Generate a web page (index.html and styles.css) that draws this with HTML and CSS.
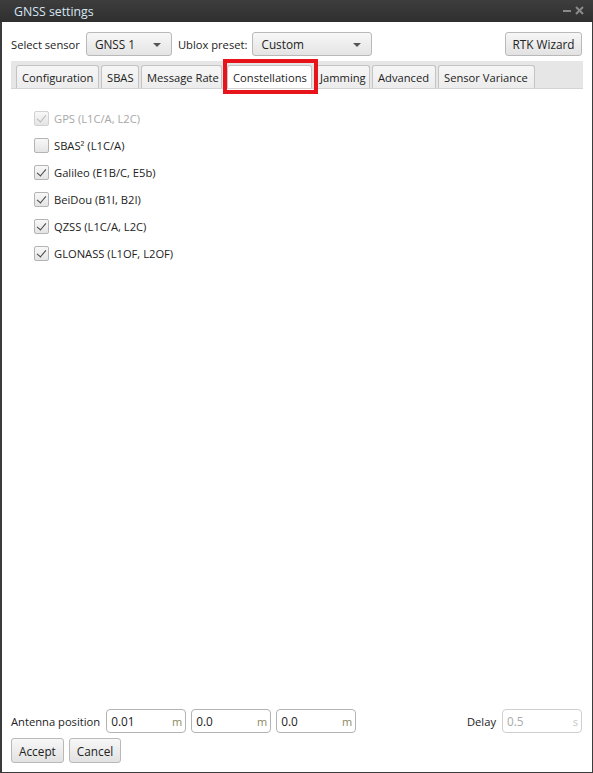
FILE: index.html
```html
<!DOCTYPE html>
<html lang="en">
  <head>
    <meta charset="UTF-8" />
    <title>GNSS settings</title>
    <link rel="stylesheet" href="styles.css">
  </head>
  <body>
    <div class="window">
      <div class="titlebar">
        <span class="title">GNSS settings</span>
        <span class="controls">
          <svg width="22" height="10" viewBox="0 0 22 10">
            <rect x="0" y="4" width="8" height="2" fill="#8a8a8a" />
            <path d="M13 1 L20 8 M20 1 L13 8" stroke="#8a8a8a" stroke-width="2" />
          </svg>
        </span>
      </div>

      <div class="content">
        <div class="toprow">
          <span class="label">Select sensor</span>
          <div class="combo sensor">GNSS 1<span class="arrow"></span></div>
          <span class="label">Ublox preset:</span>
          <div class="combo preset">Custom<span class="arrow"></span></div>
          <div class="spacer"></div>
          <button class="btn wizard">RTK Wizard</button>
        </div>

        <div class="tabbar">
          <div class="tab w-config">Configuration</div>
          <div class="tab w-sbas">SBAS</div>
          <div class="tab w-msg">Message Rate</div>
          <div class="tab w-const selected">Constellations</div>
          <div class="tab w-jam">Jamming</div>
          <div class="tab w-adv">Advanced</div>
          <div class="tab w-var">Sensor Variance</div>
        </div>

        <div class="checklist">
          <label class="check disabled"><span class="box on"></span>GPS (L1C/A, L2C)</label>
          <label class="check"><span class="box"></span>SBAS² (L1C/A)</label>
          <label class="check"><span class="box on"></span>Galileo (E1B/C, E5b)</label>
          <label class="check"><span class="box on"></span>BeiDou (B1I, B2I)</label>
          <label class="check"><span class="box on"></span>QZSS (L1C/A, L2C)</label>
          <label class="check"><span class="box on"></span>GLONASS (L1OF, L2OF)</label>
        </div>

        <div class="antenna">
          <span class="label">Antenna position</span>
          <div class="field">0.01<span class="unit">m</span></div>
          <div class="field">0.0<span class="unit">m</span></div>
          <div class="field">0.0<span class="unit">m</span></div>
          <div class="spacer"></div>
          <span class="label">Delay</span>
          <div class="field disabled">0.5<span class="unit">s</span></div>
        </div>

        <div class="actions">
          <button class="btn">Accept</button>
          <button class="btn">Cancel</button>
        </div>
      </div>
    </div>
  </body>
</html>
```

FILE: styles.css
```css
* {
  margin: 0;
  padding: 0;
  box-sizing: border-box;
}

body {
  font-family: "Open Sans", "Noto Sans", sans-serif;
  font-size: 11.2px;
  color: #222;
  background: #fff;
}

.window {
  width: 593px;
  height: 773px;
  display: flex;
  flex-direction: column;
  border: 1px solid #3b3b3b;
  border-top: none;
  border-left-width: 2px;
}

.titlebar {
  height: 22px;
  background: linear-gradient(#3d3d3d, #2f2f2f);
  color: #d7e6f4;
  font-size: 12.3px;
  display: flex;
  align-items: center;
  padding: 0 8px 0 14px;
  margin: 0 -1px 0 -2px;
}

.titlebar .title {
  flex: 1;
}

.controls svg {
  display: block;
}

.content {
  flex: 1;
  display: flex;
  flex-direction: column;
  padding: 10px 10px 9px 9px;
}

.toprow {
  display: flex;
  align-items: center;
  height: 24px;
}

.spacer {
  flex: 1;
}

.label {
  margin-right: 5px;
}

.combo {
  position: relative;
  height: 24px;
  border: 1px solid #b9b9b9;
  border-radius: 3px;
  background: linear-gradient(#f7f7f7, #e4e4e4);
  display: flex;
  align-items: center;
  padding-left: 8px;
  margin-right: 6px;
  font-size: 11.8px;
}

.combo.sensor {
  width: 86px;
  margin-left: 1px;
}

.combo.preset {
  width: 120px;
}

.arrow {
  position: absolute;
  right: 10px;
  top: 10px;
  border-left: 4px solid transparent;
  border-right: 4px solid transparent;
  border-top: 4px solid #555;
}

.btn {
  font-family: inherit;
  font-size: 11.8px;
  color: #222;
  height: 25px;
  padding: 0 7px;
  border: 1px solid #b9b9b9;
  border-radius: 3px;
  background: linear-gradient(#f7f7f7, #e2e2e2);
  white-space: nowrap;
}

.btn.wizard {
  width: 77px;
  height: 24px;
  padding: 0;
}

.tabbar {
  margin-top: 5px;
  height: 28px;
  background: #e6e6e6;
  border-bottom: 1px solid #d4d4d4;
  display: flex;
  align-items: flex-end;
  gap: 2px;
  padding-left: 5px;
  width: 572px;
}

.tab {
  height: 23px;
  border: 1px solid #c4c4c4;
  border-bottom: none;
  border-radius: 3px 3px 0 0;
  background: linear-gradient(#f6f6f6, #ececec);
  display: flex;
  align-items: center;
  padding-left: 5px;
  white-space: nowrap;
  overflow: hidden;
}

.tab.selected {
  position: relative;
  overflow: visible;
  background: #fff;
  margin-left: 3px;
}

.tab.selected::after {
  content: "";
  position: absolute;
  left: -5px;
  right: -7px;
  top: -7px;
  bottom: -6px;
  border: 4px solid #e8141c;
}

.w-config { width: 83px; }
.w-sbas { width: 38px; }
.w-msg { width: 81px; }
.w-const { width: 85px; }
.w-jam { width: 56px; }
.w-adv { width: 64px; }
.w-var { width: 97px; }

.checklist {
  display: flex;
  flex-direction: column;
  gap: 11px;
  padding: 21px 0 0 23px;
  flex: 1;
}

.check {
  display: flex;
  align-items: center;
  height: 16px;
  gap: 5px;
}

.check.disabled {
  color: #a8a8a8;
}

.box {
  width: 15px;
  height: 15px;
  border: 1px solid #b4b4b4;
  border-radius: 2px;
  background: linear-gradient(#f8f8f8, #e4e4e4);
  position: relative;
}

.box.on::after {
  content: "";
  position: absolute;
  left: 4px;
  top: 1px;
  width: 4px;
  height: 8px;
  border-right: 1.5px solid #444;
  border-bottom: 1.5px solid #444;
  transform: rotate(40deg);
}

.check.disabled .box {
  border-color: #d2d2d2;
}

.check.disabled .box.on::after {
  border-color: #b8b8b8;
}

.antenna {
  display: flex;
  align-items: center;
  height: 24px;
  gap: 5px;
  margin-bottom: -1px;
}

.antenna .label {
  margin-right: 1px;
}

.field {
  width: 80px;
  height: 24px;
  border: 1px solid #b3b3b3;
  border-radius: 4px;
  display: flex;
  align-items: center;
  padding: 0 3px 0 4px;
  font-size: 11.8px;
}

.field .unit {
  margin-left: auto;
  color: #8a8a60;
  font-size: 11px;
}

.field.disabled {
  color: #aaa;
  border-color: #cfcfcf;
}

.field.disabled .unit {
  color: #c8c8c8;
}

.actions {
  display: flex;
  gap: 5px;
  margin-top: 6px;
}
```
